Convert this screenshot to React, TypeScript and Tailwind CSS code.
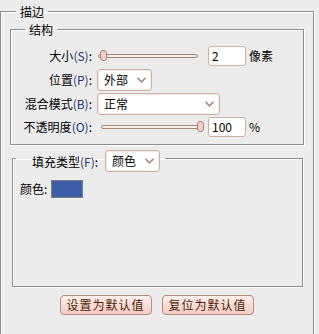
import { ReactNode } from 'react'

const FONT = { fontFamily: '"Noto Sans CJK SC", "Noto Sans", sans-serif' }

function Label({ text, mn }: { text: string; mn: string }) {
  return (
    <span className="whitespace-nowrap">
      {text}
      <span className="text-[#22386e]">({mn})</span>:
    </span>
  )
}

function Chevron() {
  return (
    <svg width="9" height="6" viewBox="0 0 9 6" className="shrink-0">
      <path d="M0.5 0.8 L4.5 4.8 L8.5 0.8" fill="none" stroke="#a58c80" strokeWidth="1.6" />
    </svg>
  )
}

function Select({ value, width }: { value: string; width: string }) {
  return (
    <div
      className={`flex h-[22px] ${width} items-center justify-between rounded-[3px] border border-[#cdb2a4] bg-white pl-[6px] pr-[5px] shadow-[inset_0_0_0_1px_#f4ece8]`}
    >
      <span className="leading-none">{value}</span>
      <Chevron />
    </div>
  )
}

function Slider({ atEnd }: { atEnd: boolean }) {
  return (
    <div className="relative h-[12px] w-full">
      <div className="absolute left-0 right-[3px] top-[4px] h-[4px] rounded-full border border-[#a98770] bg-[#f6eee9]" />
      <div
        className={`absolute top-0 h-[11px] w-[7px] rounded-[3px] border border-[#a98770] bg-[#f5cdca] ${atEnd ? 'right-0' : 'left-[2px]'}`}
      />
    </div>
  )
}

function NumberBox({ value }: { value: string }) {
  return (
    <div className="flex h-[20px] w-[38px] items-center rounded-[3px] border border-[#cbb0a2] bg-white px-[3px] leading-none">
      {value}
    </div>
  )
}

function Row({ label, children, h }: { label: ReactNode; children: ReactNode; h: string }) {
  return (
    <div className={`flex ${h} items-center`}>
      <div className="w-[81px] text-right">{label}</div>
      <div className="ml-[5px] flex items-center">{children}</div>
    </div>
  )
}

function Button({ children }: { children: ReactNode }) {
  return (
    <button className="h-[20px] w-[92px] rounded-[4px] border border-[#b48f7f] bg-gradient-to-b from-[#fff0ec] to-[#f6c9c2] text-[12px] leading-none tracking-[1px] text-[#4a1f0a]">
      {children}
    </button>
  )
}

const etched = 'border border-[#8e8e8e] shadow-[1px_1px_0_#ffffff,inset_1px_1px_0_#ffffff]'

export default function App() {
  return (
    <div className="h-[334px] w-[319px] overflow-hidden bg-[#ececec] text-[12px] text-black" style={FONT}>
      <fieldset className={`mt-[3px] h-[345px] w-[314px] ${etched} px-[9px]`}>
        <legend className="ml-[6px] px-[4px] text-[12px] leading-[17px]">描边</legend>

        <fieldset className={`mt-[1px] w-[294px] ${etched} pb-[7px]`}>
          <legend className="ml-[14px] px-[4px] leading-[17px]">结构</legend>
          <div className="flex flex-col pt-[8px]">
            <Row label={<Label text="大小" mn="S" />} h="h-[20px]">
              <div className="w-[111px] pl-[1px] pr-[7px]">
                <Slider atEnd={false} />
              </div>
              <NumberBox value="2" />
              <span className="ml-[3px]">像素</span>
            </Row>
            <Row label={<Label text="位置" mn="P" />} h="h-[22px] mt-[3px]">
              <Select value="外部" width="w-[55px]" />
            </Row>
            <Row label={<Label text="混合模式" mn="B" />} h="h-[22px] mt-[2px]">
              <Select value="正常" width="w-[123px]" />
            </Row>
            <Row label={<Label text="不透明度" mn="O" />} h="h-[20px] mt-[2px]">
              <div className="w-[111px] pl-[4px] pr-[4px]">
                <Slider atEnd={true} />
              </div>
              <NumberBox value="100" />
              <span className="ml-[3px]">%</span>
            </Row>
          </div>
        </fieldset>

        <fieldset className={`ml-[2px] mt-[5px] h-[137px] w-[291px] ${etched}`}>
          <legend className="ml-[3px] flex h-[16px] items-start pl-[16px] pr-[5px]">
            <span className="mt-[3px]">
              <Label text="填充类型" mn="F" />
            </span>
            <div className="ml-[7px]">
              <Select value="颜色" width="w-[55px]" />
            </div>
          </legend>
          <div className="flex items-center pl-[7px] pt-[14px]">
            <span>颜色:</span>
            <div className="ml-[4px] h-[18px] w-[32px] border border-[#7d7d7d] bg-[#3b5ea6]" />
          </div>
        </fieldset>

        <div className="mt-[8px] flex justify-center gap-[10px] pr-[1px]">
          <Button>设置为默认值</Button>
          <Button>复位为默认值</Button>
        </div>
      </fieldset>
    </div>
  )
}
